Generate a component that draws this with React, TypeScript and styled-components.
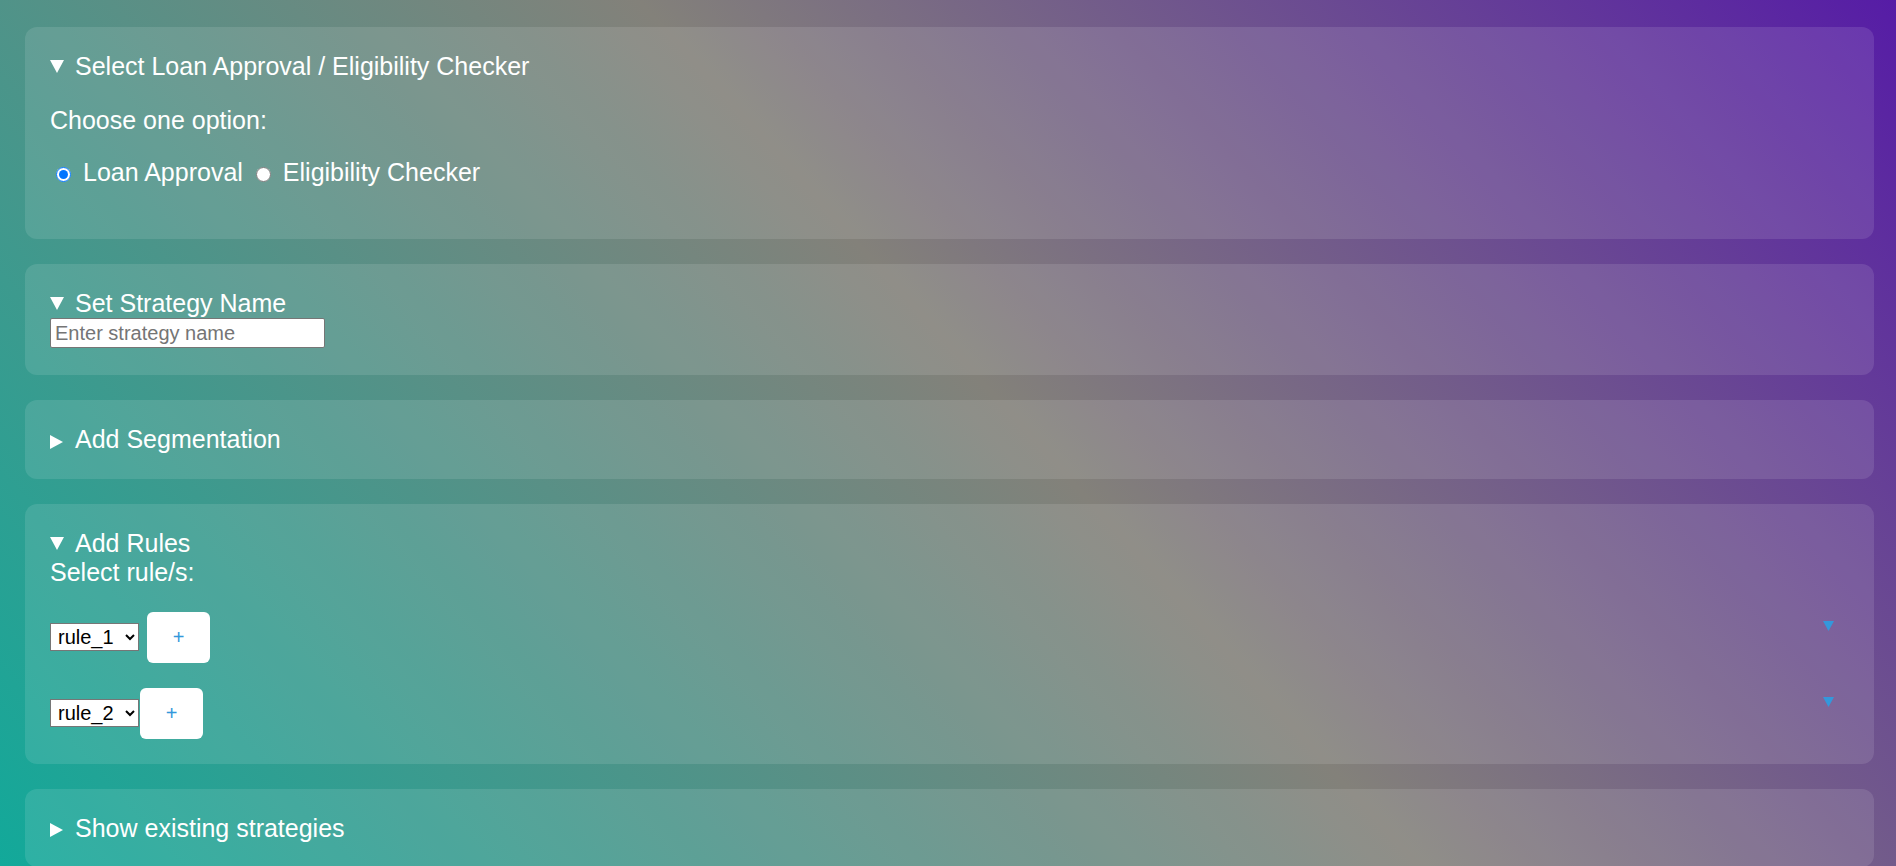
import React from "react";
import styled, { createGlobalStyle } from "styled-components";

const GlobalStyle = createGlobalStyle`
  html {
    background: linear-gradient(48deg, #12a99a 0%, #83817a 53%, #561ca6 100%) fixed;
    min-height: 100%;
  }
  body {
    margin: 0;
    min-height: 100vh;
    font-family: "Liberation Sans", Arial, sans-serif;
    color: #ffffff;
  }
  * { box-sizing: border-box; }
`;

const Page = styled.main`
  display: flex;
  flex-direction: column;
  gap: 25px;
  padding: 27px 22px 25px 25px;
`;

const Panel = styled.details`
  background: rgba(255, 255, 255, 0.11);
  border-radius: 12px;
  padding: 25px;
`;

const Summary = styled.summary`
  list-style: none;
  display: flex;
  align-items: center;
  gap: 11px;
  font-size: 25px;
  line-height: 28.75px;
  height: 28.75px;
  cursor: pointer;
  &::-webkit-details-marker { display: none; }
  &::marker { content: ""; }
`;

const Marker = styled.svg<{ $shift?: number }>`
  flex: none;
  width: 14px;
  height: 14px;
  transform: translateY(${(p) => p.$shift ?? 0}px);
`;

const Prompt = styled.p`
  margin: 25px 0 0;
  font-size: 25px;
  line-height: 28.75px;
`;

const RadioRow = styled.div`
  display: flex;
  align-items: center;
  height: 29px;
  margin: 23px 0 27px;
  font-size: 25px;
`;

const RadioLabel = styled.label<{ $first?: boolean }>`
  display: flex;
  align-items: center;
  margin-left: ${(p) => (p.$first ? 0 : 7)}px;
  cursor: pointer;
`;

const Radio = styled.input`
  width: 15px;
  height: 15px;
  margin: 4px 12px 0 6px;
  accent-color: #0075ff;
`;

const NameInput = styled.input`
  display: block;
  margin: 1px 0 2px;
  width: 275px;
  height: 30px;
  padding: 1px 4px;
  border: 1px solid #767676;
  border-radius: 2px;
  background: #ffffff;
  font-family: "Liberation Sans", Arial, sans-serif;
  font-size: 20px;
  color: #000;
  &::placeholder { color: #757575; }
`;

const FieldLabel = styled.div`
  font-size: 25px;
  line-height: 28.75px;
`;

const RuleList = styled.div`
  display: flex;
  flex-direction: column;
  gap: 25px;
  margin-top: 25px;
`;

const RuleRow = styled.div`
  display: flex;
  align-items: center;
  height: 51px;
`;

const RuleSelect = styled.select`
  width: 89px;
  height: 28px;
  padding: 0 0 0 3px;
  border: 1px solid #767676;
  border-radius: 0;
  background: #ffffff;
  color: #000;
  font-family: "Liberation Sans", Arial, sans-serif;
  font-size: 20px;
`;

const AddButton = styled.button<{ $gap: number }>`
  margin-left: ${(p) => p.$gap}px;
  width: 63px;
  height: 51px;
  border: none;
  border-radius: 6px;
  background: #ffffff;
  color: #3498db;
  font-family: "Liberation Sans", Arial, sans-serif;
  font-size: 20px;
  cursor: pointer;
`;

const Toggle = styled.svg`
  margin-left: auto;
  margin-right: 15px;
  align-self: flex-start;
  margin-top: 9px;
  width: 11px;
  height: 10px;
`;

const Down = () => (
  <Marker viewBox="0 0 14 14" $shift={0}>
    <polygon points="0,1 14,1 7,14" fill="#ffffff" />
  </Marker>
);

const Right = () => (
  <Marker viewBox="0 0 14 14" $shift={2}>
    <polygon points="0,0 13,7 0,14" fill="#ffffff" />
  </Marker>
);

const rules = [
  { id: "rule_1", gap: 8 },
  { id: "rule_2", gap: 1 },
];

export default function App() {
  return (
    <>
      <GlobalStyle />
      <Page>
        <Panel open>
          <Summary>
            <Down />
            Select Loan Approval / Eligibility Checker
          </Summary>
          <Prompt>Choose one option:</Prompt>
          <RadioRow>
            <RadioLabel $first>
              <Radio type="radio" name="kind" defaultChecked />
              Loan Approval
            </RadioLabel>
            <RadioLabel>
              <Radio type="radio" name="kind" />
              Eligibility Checker
            </RadioLabel>
          </RadioRow>
        </Panel>

        <Panel open>
          <Summary>
            <Down />
            Set Strategy Name
          </Summary>
          <NameInput type="text" placeholder="Enter strategy name" />
        </Panel>

        <Panel>
          <Summary>
            <Right />
            Add Segmentation
          </Summary>
        </Panel>

        <Panel open>
          <Summary>
            <Down />
            Add Rules
          </Summary>
          <FieldLabel>Select rule/s:</FieldLabel>
          <RuleList>
            {rules.map((r) => (
              <RuleRow key={r.id}>
                <RuleSelect defaultValue={r.id}>
                  <option value="rule_1">rule_1</option>
                  <option value="rule_2">rule_2</option>
                </RuleSelect>
                <AddButton $gap={r.gap}>+</AddButton>
                <Toggle viewBox="0 0 11 10">
                  <polygon points="0,0 11,0 5.5,10" fill="#3498db" />
                </Toggle>
              </RuleRow>
            ))}
          </RuleList>
        </Panel>

        <Panel>
          <Summary>
            <Right />
            Show existing strategies
          </Summary>
        </Panel>
      </Page>
    </>
  );
}
